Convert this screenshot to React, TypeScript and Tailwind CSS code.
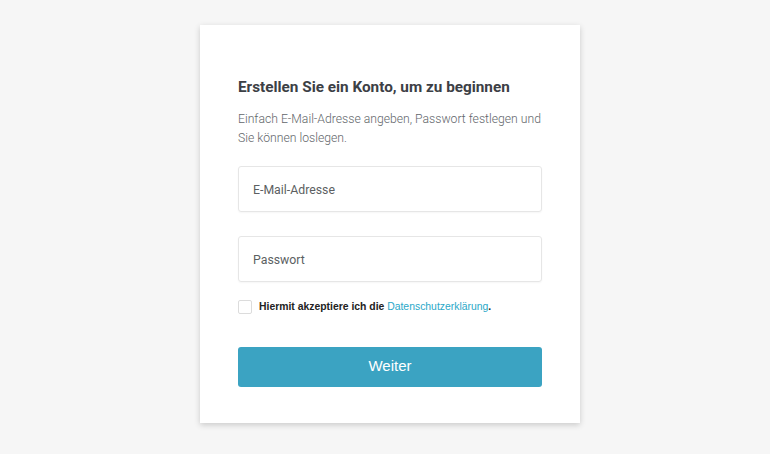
export default function App() {
  return (
    <div className="min-h-[454px] w-full bg-[#f6f6f6] flex justify-center pt-[25px] pl-[10px]" style={{ fontFamily: "Roboto, 'Liberation Sans', sans-serif" }}>
      <div className="w-[380px] h-[398px] bg-white shadow-[0_2px_6px_rgba(0,0,0,0.18)] px-[38px] pt-[52px]">
        <h1 className="text-[15.3px] leading-[20px] font-bold text-[#3c4045]">Erstellen Sie ein Konto, um zu beginnen</h1>
        <p className="mt-[13px] text-[12.2px] leading-[19px] font-light text-[#62666a]">
          Einfach E-Mail-Adresse angeben, Passwort festlegen und Sie können loslegen.
        </p>
        <div className="mt-[18px] h-[46px] rounded-[3px] border border-[#e6e6e6] shadow-[0_1px_2px_rgba(0,0,0,0.04)] flex items-center px-[14px] pt-[2px] text-[12.3px] text-[#5c5f62]">
          E-Mail-Adresse
        </div>
        <div className="mt-[24px] h-[46px] rounded-[3px] border border-[#e6e6e6] shadow-[0_1px_2px_rgba(0,0,0,0.04)] flex items-center px-[14px] pt-[2px] text-[12.3px] text-[#5c5f62]">
          Passwort
        </div>
        <div className="mt-[17px] flex items-center">
          <div className="w-[14px] h-[14px] rounded-[2px] border border-[#dcdcdc] bg-white" />
          <span className="ml-[7px] text-[10.4px] font-bold text-[#222]" style={{ fontFamily: "'Liberation Sans', Arial, sans-serif" }}>
            Hiermit akzeptiere ich die <span className="font-normal text-[#2aa8c8]">Datenschutzerklärung</span>.
          </span>
        </div>
        <button className="mt-[32px] w-full h-[40px] rounded-[3px] bg-[#3ba3c2] text-white text-[15px]" style={{ fontFamily: "'Liberation Sans', Arial, sans-serif" }}>
          Weiter
        </button>
      </div>
    </div>
  );
}
